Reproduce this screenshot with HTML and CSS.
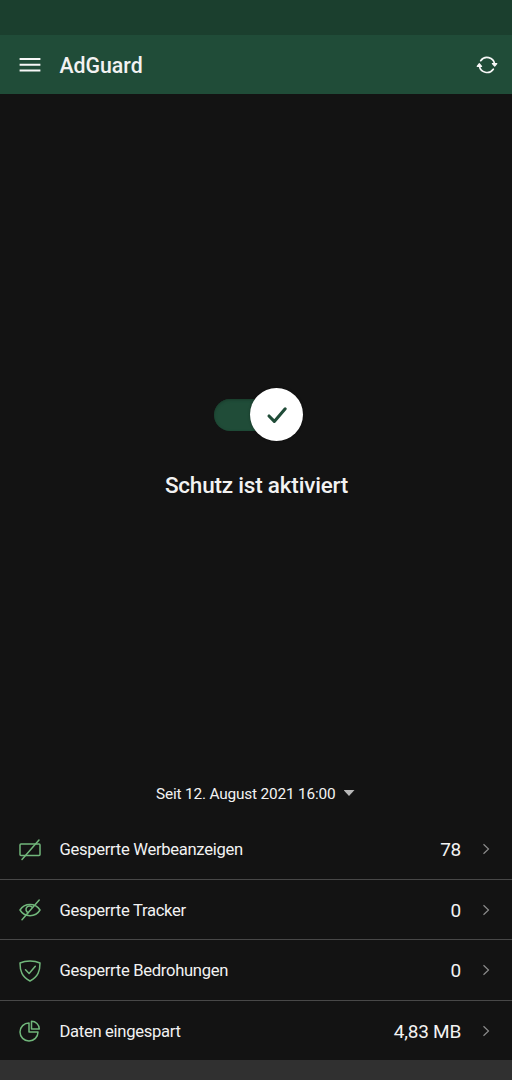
FILE: index.html
```html
<!DOCTYPE html>
<html lang="de">
<head>
<meta charset="utf-8">
<title>AdGuard</title>
<link rel="stylesheet" href="styles.css">
</head>
<body>
<div class="status-bar"></div>
<header class="toolbar">
  <svg class="icon" viewBox="0 0 24 24"><path class="bar" d="M1.600 6H22.400M1.600 11.700H22.400M1.600 17.500H22.400"/></svg>
  <h1 class="title">AdGuard</h1>
  <svg class="icon" viewBox="0 0 24 24"><g class="sync"><path d="M5.700 7.700A7.700 7.700 0 0 1 19.600 11M18.300 16.200A7.700 7.700 0 0 1 4.400 12.900"/><path class="head" d="M17.400 10.500H21.800L19.700 13.100ZM2.200 13.300H6.600L4.300 10.700Z"/></g></svg>
</header>
<main class="protection">
  <div class="switch"><div class="knob"><svg class="check" viewBox="0 0 24 24"><path d="M4 13 9.3 18.4 20.2 5.8"/></svg></div></div>
  <p class="state">Schutz ist aktiviert</p>
</main>
<div class="period"><span>Seit 12. August 2021 16:00</span><i class="caret"></i></div>
<section class="stats">
  <div class="row">
    <svg class="icon green" viewBox="0 0 24 24"><rect x="2" y="6" width="20" height="11.500" rx="1"/><path d="M4 21.500 21 2"/></svg>
    <span class="label">Gesperrte Werbeanzeigen</span><span class="value">78</span>
    <svg class="chevron" viewBox="0 0 8 12"><path d="M1.500 1.200 6.500 6 1.500 10.800"/></svg>
  </div>
  <div class="row">
    <svg class="icon green" viewBox="0 0 24 24"><path d="M2 12C6.500 4.500 17.500 4.500 22 12C17.500 19.500 6.500 19.500 2 12ZM4 21.700 21.200 2"/><path d="M10 14.600A3.500 3.500 0 1 1 14.200 9.200"/></svg>
    <span class="label">Gesperrte Tracker</span><span class="value">0</span>
    <svg class="chevron" viewBox="0 0 8 12"><path d="M1.500 1.200 6.500 6 1.500 10.800"/></svg>
  </div>
  <div class="row">
    <svg class="icon green" viewBox="0 0 24 24"><path d="M12 2C8.500 2 5 2.600 2 4C2 12 3.800 17.800 12 22C20.200 17.800 22 12 22 4C19 2.600 15.500 2 12 2Z"/><path d="M7.500 10.700 11.100 14.500 17.300 7.200"/></svg>
    <span class="label">Gesperrte Bedrohungen</span><span class="value">0</span>
    <svg class="chevron" viewBox="0 0 8 12"><path d="M1.500 1.200 6.500 6 1.500 10.800"/></svg>
  </div>
  <div class="row">
    <svg class="icon green" viewBox="0 0 24 24"><path d="M11 4A9 9 0 1 0 20 13H11Z"/><path d="M13.500 2.300V9.900H21.300A7.800 7.800 0 0 0 13.500 2.300Z"/></svg>
    <span class="label">Daten eingespart</span><span class="value">4,83 MB</span>
    <svg class="chevron" viewBox="0 0 8 12"><path d="M1.500 1.200 6.500 6 1.500 10.800"/></svg>
  </div>
</section>
<footer class="nav-bar"></footer>
</body>
</html>
```
FILE: styles.css
```css
* { box-sizing: border-box; }
body {
  margin: 0;
  height: 1080px;
  display: flex;
  flex-direction: column;
  overflow: hidden;
  background: #131313;
  color: #f2f2f2;
  font-family: Roboto, "Liberation Sans", sans-serif;
}
.status-bar { height: 35px; background: #1b3f2e; }
.toolbar {
  height: 59px;
  padding: 0 13.5px 0 17.6px;
  display: flex;
  align-items: center;
  background: #204c38;
}
.title { flex: 1; margin: 2px 0 0 17.800px; font-size: 21.3px; font-weight: 500; line-height: 28px; }
.icon { width: 24px; height: 24px; flex: none; fill: none; stroke: #f7f7f7; stroke-width: 1.5; stroke-linecap: round; stroke-linejoin: round; }
.bar { stroke-width: 2; stroke-linecap: butt; }
.sync { stroke-width: 1.700; }
.head { fill: #f7f7f7; stroke-width: 1.200; }
.protection { flex: 1; padding-top: 294px; display: flex; flex-direction: column; align-items: center; }
.switch {
  width: 89px;
  height: 53px;
  margin-left: 5px;
  display: flex;
  align-items: center;
  justify-content: flex-end;
}
.switch::before {
  content: "";
  width: 56px;
  height: 32px;
  margin-right: -20px;
  border-radius: 16px;
  background: #204c38;
  box-shadow: inset 0 1px 3px #183b2b;
}
.knob {
  width: 53px;
  height: 53px;
  display: grid;
  place-items: center;
  border-radius: 50%;
  background: #fff;
  box-shadow: 0 0 3px #0005;
}
.check { width: 24px; height: 24px; margin-top: 1px; fill: none; stroke: #204c38; stroke-width: 3.1; stroke-linecap: round; stroke-linejoin: round; }
.state { margin: 29px 0 0 1px; font-size: 22.5px; font-weight: 500; line-height: 30px; letter-spacing: -.2px; }
.period { height: 52px; padding: 1px 0 0 156px; display: flex; align-items: center; gap: 8px; font-size: 15.4px; letter-spacing: -.18px; }
.caret { width: 11px; height: 6px; margin-top: -1px; background: #b8b8b8; clip-path: polygon(0 0, 100% 0, 50% 100%); }
.stats { height: 241px; display: grid; grid-template-rows: 60px 60px 61px 60px; }
.row { padding: 0 22px 0 17.6px; display: flex; align-items: center; }
.row + .row { border-top: 1px solid #484848; }
.green { margin-top: 1px; stroke: #71b77b; stroke-width: 1.5; }
.label { margin: 1px 0 0 17.9px; flex: 1; font-size: 16.6px; letter-spacing: -.3px; }
.value { margin-top: 1px; font-size: 19px; letter-spacing: -.25px; }
.chevron { width: 8px; height: 12px; margin-left: 21px; fill: none; stroke: #8b8b8b; stroke-width: 1.2; }
.nav-bar { height: 20px; background: #303030; }
```
